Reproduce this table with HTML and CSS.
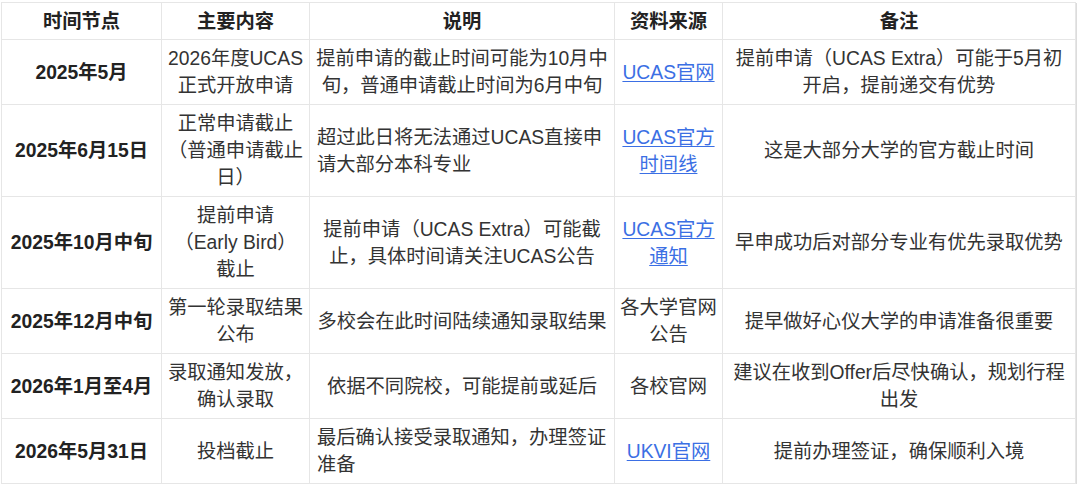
FILE: index.html
```html
<!DOCTYPE html>
<html lang="zh-CN">
<head>
<meta charset="utf-8">
<title>UCAS 时间线</title>
<link rel="stylesheet" href="styles.css">
</head>
<body>
<table class="timeline">
  <colgroup>
    <col class="c-date">
    <col class="c-main">
    <col class="c-desc">
    <col class="c-src">
    <col class="c-note">
  </colgroup>
  <thead>
    <tr>
      <th>时间节点</th>
      <th>主要内容</th>
      <th>说明</th>
      <th>资料来源</th>
      <th>备注</th>
    </tr>
  </thead>
  <tbody>
    <tr>
      <td class="date">2025年5月</td>
      <td>2026年度UCAS<br>正式开放申请</td>
      <td>提前申请的截止时间可能为10月中<br>旬，普通申请截止时间为6月中旬</td>
      <td><a href="#">UCAS官网</a></td>
      <td>提前申请（UCAS Extra）可能于5月初<br>开启，提前递交有优势</td>
    </tr>
    <tr>
      <td class="date">2025年6月15日</td>
      <td>正常申请截止<br>（普通申请截止<br>日）</td>
      <td class="left">超过此日将无法通过UCAS直接申<br>请大部分本科专业</td>
      <td><a href="#">UCAS官方<br>时间线</a></td>
      <td>这是大部分大学的官方截止时间</td>
    </tr>
    <tr>
      <td class="date">2025年10月中旬</td>
      <td>提前申请<br>（Early Bird）<br>截止</td>
      <td>提前申请（UCAS Extra）可能截<br>止，具体时间请关注UCAS公告</td>
      <td><a href="#">UCAS官方<br>通知</a></td>
      <td>早申成功后对部分专业有优先录取优势</td>
    </tr>
    <tr>
      <td class="date">2025年12月中旬</td>
      <td>第一轮录取结果<br>公布</td>
      <td>多校会在此时间陆续通知录取结果</td>
      <td>各大学官网<br>公告</td>
      <td>提早做好心仪大学的申请准备很重要</td>
    </tr>
    <tr>
      <td class="date">2026年1月至4月</td>
      <td>录取通知发放，<br>确认录取</td>
      <td>依据不同院校，可能提前或延后</td>
      <td>各校官网</td>
      <td>建议在收到Offer后尽快确认，规划行程<br>出发</td>
    </tr>
    <tr>
      <td class="date">2026年5月31日</td>
      <td>投档截止</td>
      <td class="left">最后确认接受录取通知，办理签证<br>准备</td>
      <td><a href="#">UKVI官网</a></td>
      <td>提前办理签证，确保顺利入境</td>
    </tr>
  </tbody>
</table>
</body>
</html>
```

FILE: styles.css
```css
html, body {
  margin: 0;
  padding: 0;
  background: #ffffff;
}

body {
  padding: 2px 0 0 1px;
  font-family: "Liberation Sans", "Noto Sans CJK SC", sans-serif;
  font-size: 19.3px;
  line-height: 27px;
  color: #333333;
}

.timeline {
  table-layout: fixed;
  width: 1074px;
  border-collapse: collapse;
  box-shadow: 1px 1px 0 #dcdcdc;
}

.c-date { width: 160px; }
.c-main { width: 148px; }
.c-desc { width: 305px; }
.c-src  { width: 108px; }
.c-note { width: 353px; }

.timeline th,
.timeline td {
  border: 1px solid #e6e6e6;
  padding: 5px 5px;
  text-align: center;
  vertical-align: middle;
  word-break: break-all;
}

.timeline th {
  padding: 4.5px 5px;
  font-weight: bold;
  color: #222222;
}

.timeline td.date {
  font-weight: bold;
  color: #222222;
}

.timeline td.left {
  text-align: left;
  padding-left: 7px;
}

.timeline a {
  color: #3b6fe4;
  text-decoration: underline;
  text-underline-offset: 2px;
}
```
